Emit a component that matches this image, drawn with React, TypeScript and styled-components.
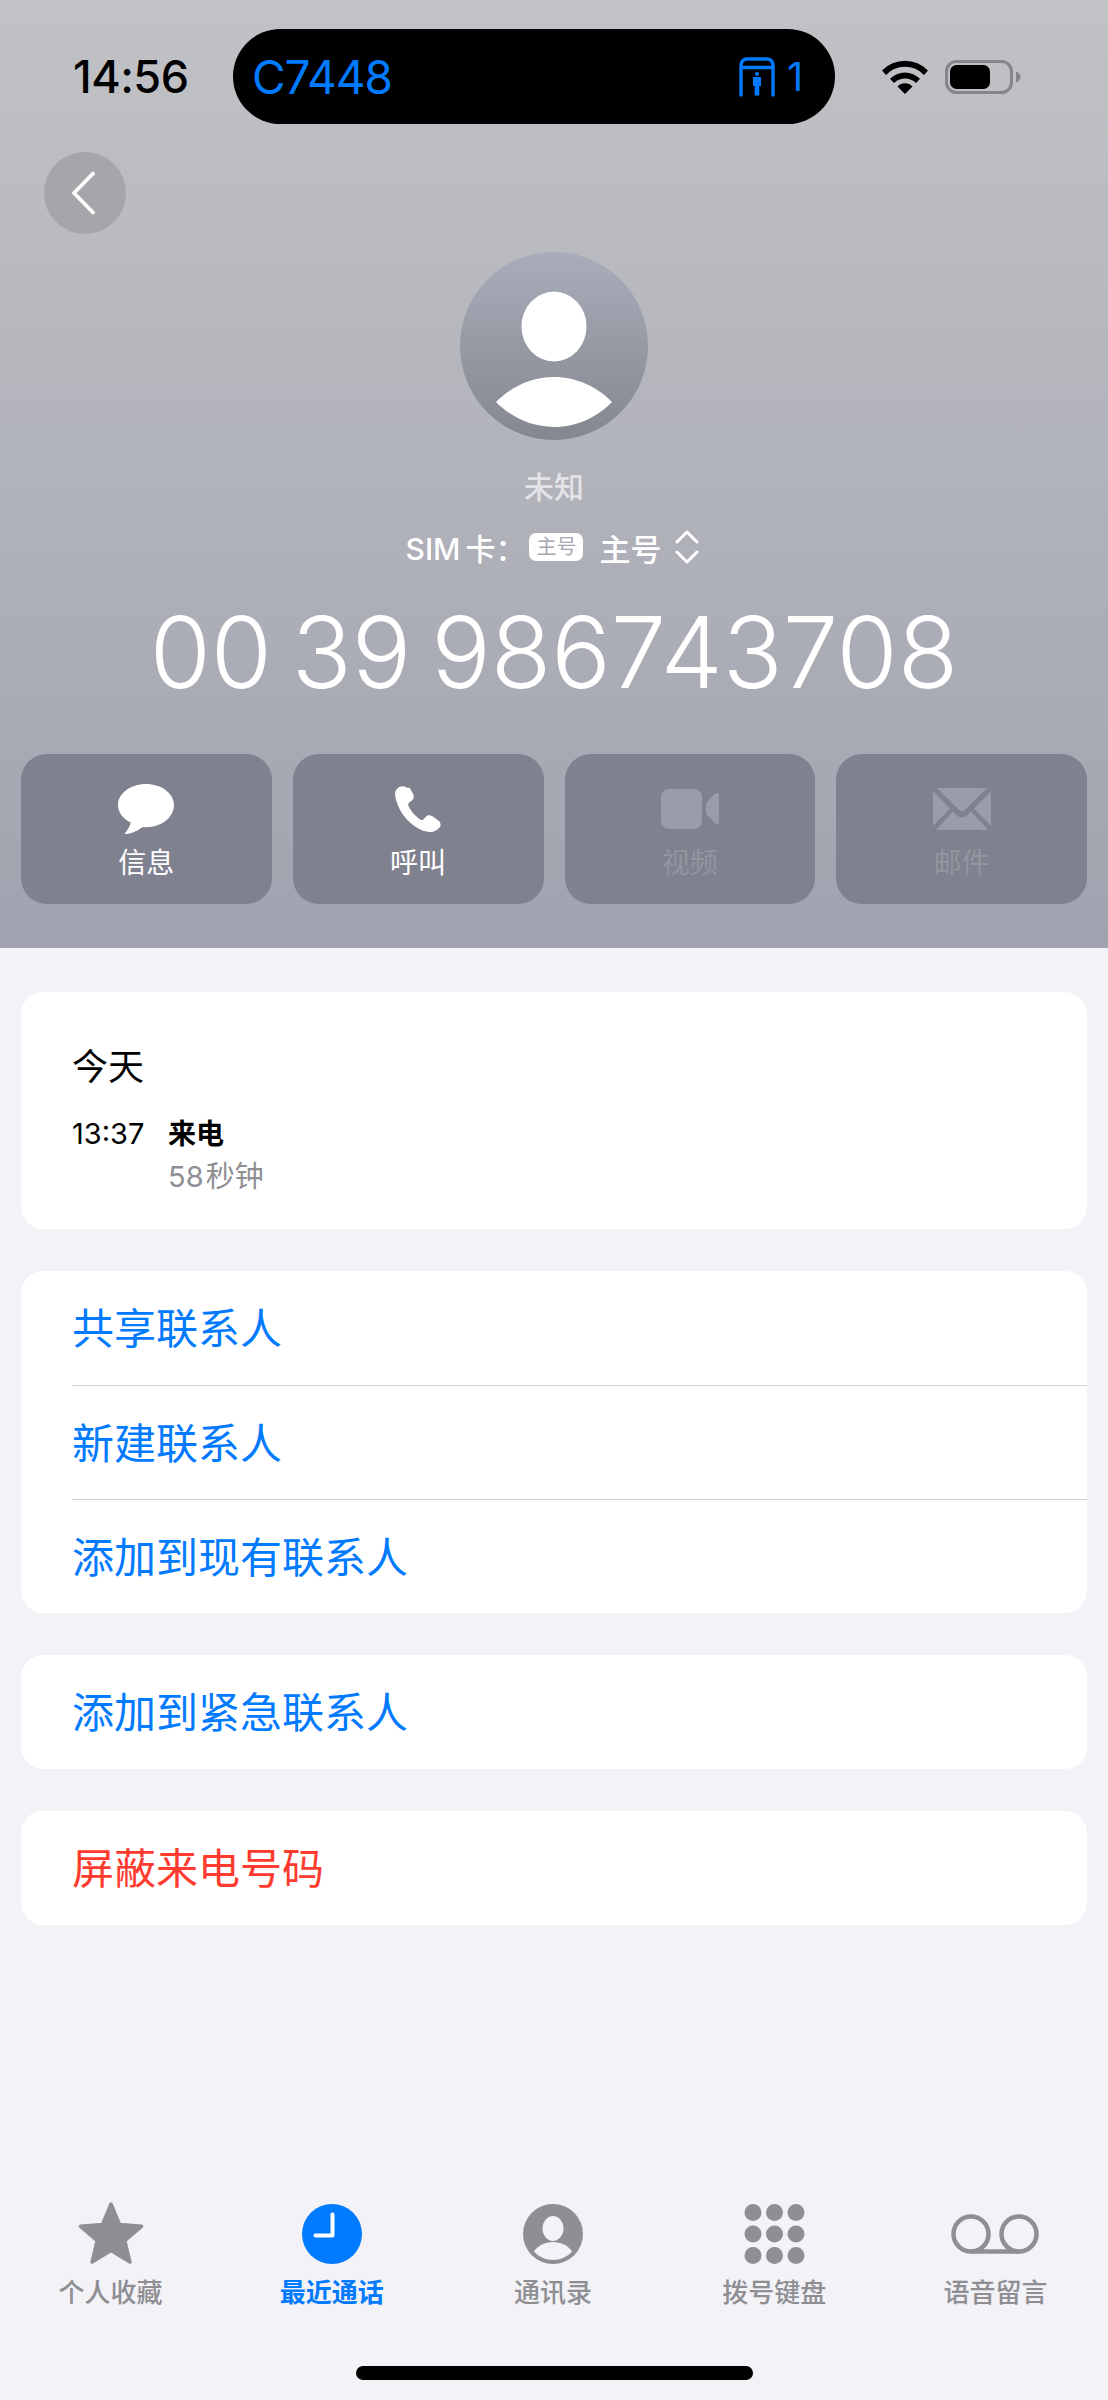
import React from "react";
import styled, { createGlobalStyle } from "styled-components";

const GlobalStyle = createGlobalStyle`
  html, body {
    margin: 0;
    padding: 0;
    background: #f2f2f7;
  }
  * {
    box-sizing: border-box;
  }
`;

const FONT = `Inter, "Noto Sans CJK SC", sans-serif`;

const tabs = [
  { label: "个人收藏", icon: <StarIcon /> },
  { label: "最近通话", icon: <ClockIcon />, active: true },
  { label: "通讯录", icon: <PersonIcon /> },
  { label: "拨号键盘", icon: <KeypadIcon /> },
  { label: "语音留言", icon: <VoicemailIcon /> },
];

function WifiIcon() {
  return (
    <svg width="46" height="34" viewBox="0 0 46 34">
      <path d="M0 10.500a32 32 0 0 1 46 0l-4 4.400a26 26 0 0 0-38 0z" fill="#000" />
      <path d="M8 18.800a21 21 0 0 1 30 0l-4 4.300a15.500 15.500 0 0 0-22 0z" fill="#000" />
      <path d="M15.500 26.500a10.500 10.500 0 0 1 15 0L23 34z" fill="#000" />
    </svg>
  );
}

function BatteryIcon() {
  return (
    <svg width="76" height="34" viewBox="0 0 76 34">
      <rect x="1.500" y="1.500" width="65" height="31" rx="10" fill="none" stroke="#85868b" strokeWidth="3" />
      <rect x="5" y="5" width="40" height="24" rx="6.500" fill="#000" />
      <path d="M71 11.500c2.600.8 4.500 3 4.500 5.500s-1.900 4.700-4.500 5.500z" fill="#85868b" />
    </svg>
  );
}

function GateIcon() {
  return (
    <svg width="36" height="40" viewBox="0 0 36 40" fill="#007aff">
      <path
        d="M2 38V8a6 6 0 0 1 6-6h20a6 6 0 0 1 6 6v30M2 10.500h32"
        fill="none"
        stroke="#007aff"
        strokeWidth="3.400"
        strokeLinecap="round"
      />
      <circle cx="18" cy="17" r="2" />
      <path d="M14 20h8v9h-1.700v9.500h-4.600V29H14z" />
    </svg>
  );
}

function ChevronLeft() {
  return (
    <svg width="26" height="44" viewBox="0 0 26 44">
      <path d="M23 2.500 4 22l19 19.500" fill="none" stroke="#fff" strokeWidth="3.800" strokeLinecap="round" strokeLinejoin="round" />
    </svg>
  );
}

function AvatarArt() {
  return (
    <svg width="188" height="188" viewBox="0 0 188 188">
      <defs>
        <linearGradient id="avatarFill" x1="0" y1="0" x2="0" y2="1">
          <stop offset="0" stopColor="#a8adba" />
          <stop offset="1" stopColor="#84878f" />
        </linearGradient>
      </defs>
      <circle cx="94" cy="94" r="94" fill="url(#avatarFill)" />
      <ellipse cx="94" cy="74.500" rx="32.500" ry="35" fill="#fff" />
      <path d="M36 150c15-15 35-25 58-25s43 10 58 25c-15 15-35 25-58 25s-43-10-58-25z" fill="#fff" />
    </svg>
  );
}

function UpDownIcon() {
  return (
    <svg width="24" height="34" viewBox="0 0 24 34">
      <path d="M2 12 12 2l10 10M2 22l10 10 10-10" fill="none" stroke="#fff" strokeWidth="3" strokeLinecap="round" strokeLinejoin="round" />
    </svg>
  );
}

function MessageIcon() {
  return (
    <svg width="56" height="50" viewBox="0 0 56 50">
      <path
        d="M28 0C12.500 0 0 9.400 0 21c0 7.400 5 13.900 12.700 17.600-.6 3.900-3 7.500-5.600 10.300-.5.600 0 1.200.7 1.100 6.300-.7 12.600-3.300 16.600-7 1.200.1 2.400.2 3.600.2 15.500 0 28-9.900 28-22.200C56 9.400 43.500 0 28 0z"
        fill="#fff"
      />
    </svg>
  );
}

function PhoneIcon() {
  return (
    <svg width="46" height="46" viewBox="0 0 46 46">
      <path
        d="M9.500.6C6.800-.5 3.600 1 1.700 3.300-.6 6 .1 10 .9 13.300c2.300 8.900 7 16.700 13.800 22.900 5.500 5 12.300 9.100 19.800 9.700 3.800.2 8.700-1.900 10.700-5.500 1.100-2.200-.1-4.400-1.900-5.800l-5.900-4.300c-2-1.300-4.700-1.400-6.500.4l-2.600 2.700c-.9.900-2.200.8-3.200.1-5-3.500-9.300-8.100-11.700-13.700-.4-1-.3-2.200.6-3l2.900-2.300c2-1.600 2.200-4.200 1.200-6.400l-3.600-6.500C13.500 2.600 11.800 1.300 9.500.6z"
        fill="#fff"
      />
    </svg>
  );
}

function VideoIcon() {
  return (
    <svg width="58" height="40" viewBox="0 0 58 40" fill="#9a9ca9">
      <rect x="0" y="0" width="41" height="40" rx="8" />
      <path d="M45 15.500c0-1 .4-1.900 1.100-2.600l8-8.400c1.300-1.300 3.900-.5 3.900 1.500v27c0 2-2.600 2.800-3.900 1.500l-8-8.400c-.7-.7-1.100-1.600-1.100-2.600z" />
    </svg>
  );
}

function MailIcon() {
  return (
    <svg width="58" height="42" viewBox="0 0 58 42" fill="#9a9ca9">
      <path d="M4 0h50L32 22c-1.700 1.700-4.300 1.700-6 0z" />
      <path d="M0 3v35l17-17.500z" />
      <path d="M58 3v35L41 20.500z" />
      <path d="M3 42h52L38 23.500l-4 4c-2.800 2.600-7.200 2.600-10 0l-4-4z" />
    </svg>
  );
}

function StarIcon() {
  return (
    <svg width="68" height="64" viewBox="0 0 68 64">
      <path
        d="M34 2 42.500 22.500 64.500 24.300 47.800 38.700 52.900 60 34 48.600 15.100 60 20.200 38.700 3.500 24.300 25.500 22.500z"
        fill="#8e8e93"
        stroke="#8e8e93"
        strokeWidth="3.500"
        strokeLinejoin="round"
      />
    </svg>
  );
}

function ClockIcon() {
  return (
    <svg width="60" height="60" viewBox="0 0 60 60">
      <circle cx="30" cy="30" r="30" fill="#007aff" />
      <path d="M30.500 10.500v21H13.500" fill="none" stroke="#fff" strokeWidth="4" strokeLinecap="round" strokeLinejoin="round" />
    </svg>
  );
}

function PersonIcon() {
  return (
    <svg width="60" height="60" viewBox="0 0 60 60">
      <circle cx="30" cy="30" r="30" fill="#8e8e93" />
      <ellipse cx="30" cy="24.500" rx="10.500" ry="12.500" fill="#f2f2f7" />
      <path d="M11 47.500C15 41.500 22 38 30 38s15 3.500 19 9.500C44 53 37.500 56 30 56s-14-3-19-8.500z" fill="#f2f2f7" />
    </svg>
  );
}

function KeypadIcon() {
  const spots = [9, 30.500, 52];
  return (
    <svg width="61" height="60" viewBox="0 0 61 60" fill="#8e8e93">
      {spots.map((y) => spots.map((x) => <circle key={`${x}-${y}`} cx={x} cy={y - 0.5} r="8.500" />))}
    </svg>
  );
}

function VoicemailIcon() {
  return (
    <svg width="88" height="40" viewBox="0 0 88 40">
      <circle cx="20" cy="20" r="17.500" fill="none" stroke="#8e8e93" strokeWidth="4.500" />
      <circle cx="68" cy="20" r="17.500" fill="none" stroke="#8e8e93" strokeWidth="4.500" />
      <path d="M20 37.500h48" stroke="#8e8e93" strokeWidth="4.500" />
    </svg>
  );
}

function App() {
  return (
    <Page>
      <GlobalStyle />
      <Header>
        <StatusBar>
          <Time>14:56</Time>
          <Island>
            <Flight>C7448</Flight>
            <Gate>
              <GateIcon />
              <GateNo>1</GateNo>
            </Gate>
          </Island>
          <StatusIcons>
            <WifiIcon />
            <BatteryIcon />
          </StatusIcons>
        </StatusBar>
        <BackButton>
          <ChevronLeft />
        </BackButton>
        <Avatar>
          <AvatarArt />
        </Avatar>
        <CallerName>未知</CallerName>
        <SimRow>
          <SimLabel>SIM 卡：</SimLabel>
          <SimBadge>主号</SimBadge>
          <SimName>主号</SimName>
          <UpDownIcon />
        </SimRow>
        <PhoneNumber>00 39 986743708</PhoneNumber>
        <Actions>
          <ActionButton>
            <ActionIcon>
              <MessageIcon />
            </ActionIcon>
            <ActionLabel>信息</ActionLabel>
          </ActionButton>
          <ActionButton>
            <ActionIcon>
              <PhoneIcon />
            </ActionIcon>
            <ActionLabel>呼叫</ActionLabel>
          </ActionButton>
          <ActionButton>
            <ActionIcon>
              <VideoIcon />
            </ActionIcon>
            <ActionLabel $disabled>视频</ActionLabel>
          </ActionButton>
          <ActionButton>
            <ActionIcon>
              <MailIcon />
            </ActionIcon>
            <ActionLabel $disabled>邮件</ActionLabel>
          </ActionButton>
        </Actions>
      </Header>

      <Content>
        <HistoryCard>
          <HistoryDate>今天</HistoryDate>
          <HistoryRow>
            <HistoryTime>13:37</HistoryTime>
            <HistoryType>来电</HistoryType>
            <HistoryLength>58 秒钟</HistoryLength>
          </HistoryRow>
        </HistoryCard>
        <Card>
          <LinkRow>共享联系人</LinkRow>
          <LinkRow>新建联系人</LinkRow>
          <LinkRow>添加到现有联系人</LinkRow>
        </Card>
        <Card>
          <LinkRow>添加到紧急联系人</LinkRow>
        </Card>
        <Card>
          <LinkRow $danger>屏蔽来电号码</LinkRow>
        </Card>
      </Content>

      <TabBar>
        {tabs.map((tab) => (
          <Tab key={tab.label}>
            <TabIcon>{tab.icon}</TabIcon>
            <TabLabel $active={tab.active}>{tab.label}</TabLabel>
          </Tab>
        ))}
      </TabBar>
      <HomeIndicator />
    </Page>
  );
}

const Page = styled.div`
  width: 1108px;
  height: 2400px;
  display: flex;
  flex-direction: column;
  overflow: hidden;
  background: #f2f2f7;
  font-family: ${FONT};
`;

const Header = styled.div`
  height: 948px;
  display: flex;
  flex-direction: column;
  padding-top: 29px;
  background: linear-gradient(180deg, #c1c2c6 0%, #babbc0 25%, #a0a2af 100%);
`;

const StatusBar = styled.div`
  height: 95px;
  display: grid;
  grid-template-columns: 233px 602px 1fr;
  align-items: center;
`;

const Time = styled.div`
  padding-left: 73px;
  font-size: 45px;
  font-weight: 500;
  letter-spacing: -0.5px;
  color: #000;
`;

const Island = styled.div`
  height: 95px;
  display: flex;
  align-items: center;
  justify-content: space-between;
  padding: 0 32px 0 19px;
  background: #000;
  border-radius: 48px;
`;

const Flight = styled.div`
  font-size: 46px;
  font-weight: 400;
  letter-spacing: -1px;
  color: #007aff;
`;

const Gate = styled.div`
  display: flex;
  align-items: center;
  gap: 12px;
`;

const GateNo = styled.div`
  font-size: 39px;
  color: #007aff;
`;

const StatusIcons = styled.div`
  display: flex;
  align-items: center;
  gap: 17px;
  padding-left: 47px;
`;

const BackButton = styled.div`
  width: 82px;
  height: 82px;
  margin: 28px 0 0 44px;
  display: flex;
  align-items: center;
  justify-content: center;
  padding-right: 4px;
  border-radius: 50%;
  background: #a4a6aa;
`;

const Avatar = styled.div`
  width: 188px;
  height: 188px;
  margin: 18px auto 0;
  line-height: 0;
`;

const CallerName = styled.div`
  margin-top: 27px;
  height: 40px;
  line-height: 40px;
  text-align: center;
  font-size: 30px;
  font-weight: 500;
  color: #e2e3e6;
`;

const SimRow = styled.div`
  margin-top: 20px;
  height: 40px;
  padding-right: 3px;
  display: flex;
  align-items: center;
  justify-content: center;
  color: #fff;
`;

const SimLabel = styled.div`
  font-size: 30px;
  font-weight: 500;
  word-spacing: -3px;
  margin-right: 4px;
`;

const SimBadge = styled.div`
  width: 54px;
  height: 28px;
  line-height: 28px;
  text-align: center;
  border-radius: 7px;
  background: #fff;
  font-size: 20px;
  color: #a4a6b0;
`;

const SimName = styled.div`
  margin: 0 14px 0 16px;
  font-size: 31px;
  font-weight: 500;
`;

const PhoneNumber = styled.div`
  margin-top: 25px;
  height: 120px;
  line-height: 120px;
  text-align: center;
  font-size: 99px;
  font-weight: 300;
  word-spacing: -8px;
  color: #fff;
  white-space: nowrap;
`;

const Actions = styled.div`
  margin-top: 42px;
  padding: 0 21px;
  display: grid;
  grid-template-columns: repeat(4, 1fr);
  gap: 21px;
`;

const ActionButton = styled.div`
  height: 150px;
  display: flex;
  flex-direction: column;
  align-items: center;
  padding-top: 30px;
  border-radius: 26px;
  background: #7f818f;
`;

const ActionIcon = styled.div`
  height: 50px;
  display: flex;
  align-items: center;
  justify-content: center;
`;

const ActionLabel = styled.div<{ $disabled?: boolean }>`
  margin-top: 9px;
  height: 40px;
  line-height: 40px;
  font-size: 28px;
  color: ${(p) => (p.$disabled ? "#93959f" : "#fff")};
`;

const Content = styled.div`
  padding: 44px 21px 0;
  display: flex;
  flex-direction: column;
  gap: 42px;
`;

const Card = styled.div`
  border-radius: 22px;
  background: #fff;
  overflow: hidden;
`;

const HistoryCard = styled(Card)`
  height: 237px;
  padding: 50px 51px 0;
`;

const HistoryDate = styled.div`
  height: 50px;
  line-height: 50px;
  font-size: 36px;
  color: #000;
`;

const HistoryRow = styled.div`
  margin-top: 22px;
  display: grid;
  grid-template-columns: 96px 1fr;
  grid-row-gap: 3px;
`;

const HistoryTime = styled.div`
  height: 40px;
  line-height: 40px;
  font-size: 29px;
  color: #000;
`;

const HistoryType = styled.div`
  height: 40px;
  line-height: 40px;
  font-size: 28px;
  font-weight: 700;
  color: #000;
`;

const HistoryLength = styled.div`
  grid-column: 2;
  height: 40px;
  line-height: 40px;
  font-size: 29px;
  word-spacing: -6px;
  color: #8e8e93;
`;

const LinkRow = styled.div<{ $danger?: boolean }>`
  height: 114px;
  margin-left: 51px;
  line-height: 115px;
  font-size: 42px;
  color: ${(p) => (p.$danger ? "#ff3b30" : "#007aff")};
  & + & {
    border-top: 1.5px solid #d1d1d4;
  }
`;

const TabBar = styled.div`
  margin-top: auto;
  padding-right: 2px;
  display: grid;
  grid-template-columns: repeat(5, 1fr);
`;

const Tab = styled.div`
  display: flex;
  flex-direction: column;
  align-items: center;
`;

const TabIcon = styled.div`
  height: 66px;
  display: flex;
  align-items: center;
  justify-content: center;
`;

const TabLabel = styled.div<{ $active?: boolean }>`
  margin-top: 8px;
  height: 36px;
  line-height: 36px;
  font-size: 26px;
  font-weight: ${(p) => (p.$active ? 600 : 500)};
  color: ${(p) => (p.$active ? "#007aff" : "#8e8e93")};
`;

const HomeIndicator = styled.div`
  width: 397px;
  height: 14px;
  margin: 55px auto 20px;
  border-radius: 7px;
  background: #000;
`;

export default App;
